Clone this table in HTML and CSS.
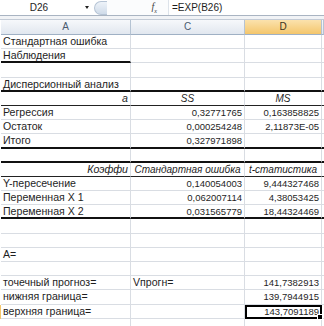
FILE: index.html
```html
<!DOCTYPE html>
<html lang="ru">
<head>
<meta charset="utf-8">
<title>Регрессия</title>
<link rel="stylesheet" href="styles.css">
</head>
<body>
<div class="formula-bar">
  <div class="name-box"><span class="name">D26</span><span class="drop"></span></div>
  <div class="splitter"></div>
  <div class="fx-zone"><span class="fx">f<sub>x</sub></span></div>
  <div class="formula">=EXP(B26)</div>
</div>
<div class="bar-gap"></div>
<div class="sheet">
  <div class="rh hd"></div><div class="ch">A</div><div class="ch">C</div><div class="ch sel">D</div><div class="ch end"></div>

  <div class="rh"></div><div class="c t">Стандартная ошибка</div><div class="c"></div><div class="c"></div><div class="c end"></div>
  <div class="rh"></div><div class="c t thick">Наблюдения</div><div class="c"></div><div class="c"></div><div class="c end"></div>
  <div class="rh"></div><div class="c"></div><div class="c"></div><div class="c"></div><div class="c end"></div>
  <div class="rh"></div><div class="c t thick">Дисперсионный анализ</div><div class="c thick"></div><div class="c thick"></div><div class="c end thick"></div>
  <div class="rh"></div><div class="c t thin it r">a</div><div class="c t thin it ctr">SS</div><div class="c t thin it ctr">MS</div><div class="c end thin"></div>
  <div class="rh"></div><div class="c t">Регрессия</div><div class="c r">0,32771765</div><div class="c r">0,163858825</div><div class="c end"></div>
  <div class="rh"></div><div class="c t">Остаток</div><div class="c r">0,000254248</div><div class="c r">2,11873E-05</div><div class="c end"></div>
  <div class="rh"></div><div class="c t thick">Итого</div><div class="c thick r">0,327971898</div><div class="c thick"></div><div class="c end thick"></div>
  <div class="rh"></div><div class="c thick"></div><div class="c thick"></div><div class="c thick"></div><div class="c end thick"></div>
  <div class="rh"></div><div class="c t thin it r">Коэффи</div><div class="c t thin it ctr over">Стандартная ошибка</div><div class="c t thin it ctr over">t-статистика</div><div class="c end thin"></div>
  <div class="rh"></div><div class="c t">Y-пересечение</div><div class="c r">0,140054003</div><div class="c r">9,444327468</div><div class="c end"></div>
  <div class="rh"></div><div class="c t">Переменная X 1</div><div class="c r">0,062007114</div><div class="c r">4,38053425</div><div class="c end"></div>
  <div class="rh"></div><div class="c t thick">Переменная X 2</div><div class="c thick r">0,031565779</div><div class="c thick r">18,44324469</div><div class="c end thick"></div>
  <div class="rh"></div><div class="c"></div><div class="c"></div><div class="c"></div><div class="c end"></div>
  <div class="rh"></div><div class="c"></div><div class="c"></div><div class="c"></div><div class="c end"></div>
  <div class="rh"></div><div class="c t">A=</div><div class="c"></div><div class="c"></div><div class="c end"></div>
  <div class="rh"></div><div class="c"></div><div class="c"></div><div class="c"></div><div class="c end"></div>
  <div class="rh"></div><div class="c t">точечный прогноз=</div><div class="c t">Vпрогн=</div><div class="c r">141,7382913</div><div class="c end"></div>
  <div class="rh"></div><div class="c t">нижняя граница=</div><div class="c"></div><div class="c r">139,7944915</div><div class="c end"></div>
  <div class="rh sel"></div><div class="c t">верхняя граница=</div><div class="c"></div><div class="c r active">143,7091189<span class="handle"></span></div><div class="c end"></div>
  <div class="rh"></div><div class="c"></div><div class="c"></div><div class="c"></div><div class="c end"></div>
</div>
</body>
</html>
```
FILE: styles.css
```css
html, body {
  margin: 0;
  padding: 0;
  background: #ffffff;
}

body {
  width: 324px;
  height: 326px;
  overflow: hidden;
  font-family: "Liberation Sans", Arial, sans-serif;
  color: #1e1e1e;
}

/* formula bar */
.formula-bar {
  display: flex;
  height: 15px;
  border-bottom: 1px solid #a9b4c2;
  background: #ffffff;
}

.name-box {
  width: 94px;
  display: flex;
  align-items: center;
  font-size: 10px;
}

.name-box .name {
  width: 78px;
  text-align: center;
}

.name-box .drop {
  width: 0;
  height: 0;
  margin-left: 7px;
  border-left: 2.5px solid transparent;
  border-right: 2.5px solid transparent;
  border-top: 3px solid #202020;
}

.splitter {
  width: 12px;
  height: 12px;
  margin-top: 1px;
  border-radius: 7px 0 0 7px;
  background: linear-gradient(#eef3f9, #cfdbe9);
  border: 1px solid #b6c4d5;
  border-right: none;
}

.fx-zone {
  width: 50px;
  display: flex;
  align-items: center;
  justify-content: flex-end;
  padding-right: 11px;
  background: #fbfcfd;
}

.fx {
  font-family: "Liberation Serif", serif;
  font-style: italic;
  font-size: 10px;
  color: #444;
}

.fx sub {
  font-size: 6px;
}

.formula {
  flex: 1;
  padding-left: 3px;
  font-size: 10px;
  line-height: 15px;
  border-left: 1px solid #dde3ea;
}

.bar-gap {
  height: 3px;
  background: #f1f3f6;
  border-bottom: 1px solid #c3cbd6;
}

/* worksheet grid */
.sheet {
  display: grid;
  grid-template-columns: 1px 130px 114px 77px 2px;
  grid-template-rows: 15px repeat(21, 14.2px);
  font-size: 9.5px;
}

.sheet > div {
  box-sizing: border-box;
  border-right: 1px solid #d9dde3;
  border-bottom: 1px solid #d9dde3;
  line-height: 13px;
  white-space: nowrap;
  overflow: hidden;
}

.ch {
  background: linear-gradient(#f6f8fb, #e1e7ef);
  border-right-color: #b5c3d3 !important;
  border-bottom-color: #9fb0c4 !important;
  color: #4a5b70;
  text-align: center;
  font-size: 10px;
  line-height: 14px !important;
}

.ch.sel {
  background: linear-gradient(#fbe2ad, #f4c66c);
  color: #3b3220;
}

.rh {
  background: #ffffff;
  border-right: none !important;
  border-bottom: none !important;
}

.rh.sel {
  background: #f4c66c;
}

.c {
  padding: 0 2px;
}

/* label cells use a slightly larger size than the figures */
.c.t {
  font-size: 10.6px;
}

.c.r {
  text-align: right;
}

.c.ctr {
  text-align: center;
}

.c.it {
  font-style: italic;
}

.c.t.it.ctr {
  font-size: 10px;
}

.c.over {
  overflow: visible !important;
  padding: 0;
  display: flex;
  justify-content: center;
}

.c.thick {
  border-bottom: 2px solid #111 !important;
}

.c.thin {
  border-bottom: 1px solid #222 !important;
}

.c.end {
  border-right: none;
  padding: 0;
}

.c.active {
  position: relative;
  overflow: visible !important;
  border: 2px solid #000 !important;
  line-height: 10px;
  padding-right: 1px;
}

.handle {
  position: absolute;
  right: -3px;
  bottom: -3px;
  width: 4px;
  height: 4px;
  background: #000;
  border: 1px solid #fff;
}
```
